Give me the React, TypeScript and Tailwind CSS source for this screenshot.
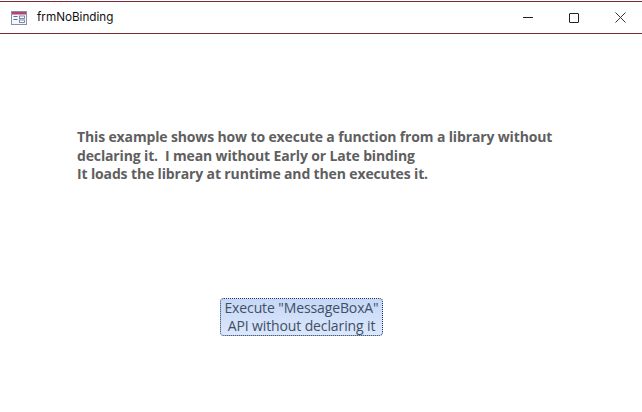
export default function App() {
  return (
    <div className="w-[642px] h-[412px] bg-white flex flex-col overflow-hidden font-['Open_Sans','Noto_Sans',sans-serif]">
      <div className="h-[33px] mt-px shrink-0 border-t border-b border-[#7d2a36] flex items-center">
        <svg width="16" height="14" viewBox="0 0 16 14" className="ml-[11px]">
          <rect x="0.5" y="0.5" width="15" height="13" fill="#f4f6fb" stroke="#8a8fa8" />
          <rect x="1" y="1" width="14" height="2.5" fill="#b3436f" />
          <rect x="2.5" y="5" width="4" height="1" fill="#5b6f95" />
          <rect x="2.5" y="8" width="4" height="1" fill="#5b6f95" />
          <rect x="8.5" y="5" width="5" height="2.5" fill="#fff" stroke="#5b6f95" strokeWidth="0.8" />
          <rect x="8.5" y="9" width="5" height="2.5" fill="#fff" stroke="#5b6f95" strokeWidth="0.8" />
        </svg>
        <span className="ml-[10px] text-[11.7px] text-[#111] font-['Inter',sans-serif]">frmNoBinding</span>
        <div className="ml-auto mr-[-1px] flex items-center">
          <div className="w-[46px] flex justify-center"><div className="w-[10px] h-px bg-[#222]" /></div>
          <div className="w-[46px] flex justify-center"><div className="w-[10px] h-[10px] border border-[#222] rounded-[1px]" /></div>
          <div className="w-[46px] flex justify-center">
            <svg width="11" height="11" viewBox="0 0 11 11"><path d="M0.5 0.5L10.5 10.5M10.5 0.5L0.5 10.5" stroke="#333" /></svg>
          </div>
        </div>
      </div>
      <div className="pl-[77px] pt-[94px] text-[14px] leading-[18.5px] font-bold text-[#5f5f5f] tracking-[-0.14px] whitespace-pre">
        <p>This example shows how to execute a function from a library without</p>
        <p>declaring it.  I mean without Early or Late binding</p>
        <p>It loads the library at runtime and then executes it.</p>
      </div>
      <div className="ml-[220px] mt-[114.5px] w-[163px] h-[38px] rounded-[4px] border border-dotted border-[#1f3864] bg-gradient-to-b from-[#c6d8f7] to-[#dce7fb] text-[14px] leading-[18px] text-[#3f4f66] tracking-[-0.12px] flex flex-col items-center justify-center">
        <span>Execute "MessageBoxA"</span>
        <span>API without declaring it</span>
      </div>
    </div>
  );
}
